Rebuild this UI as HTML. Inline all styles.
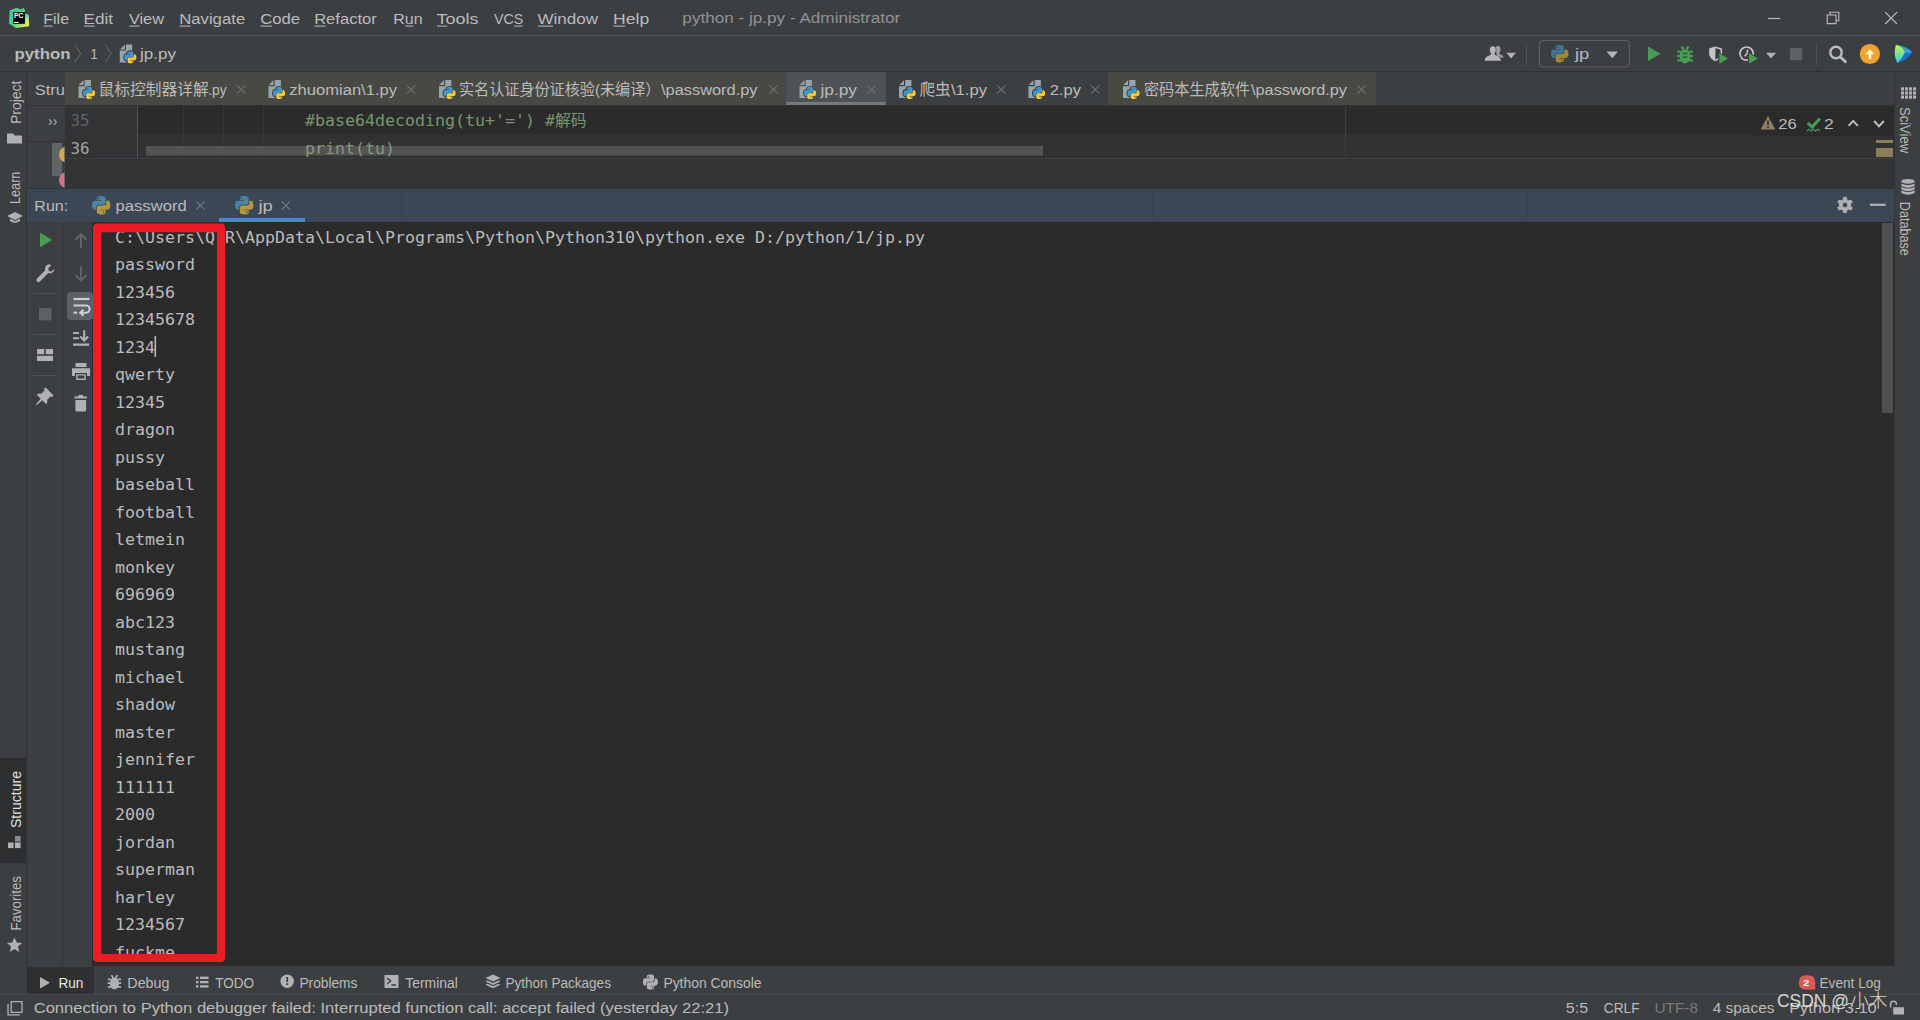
<!DOCTYPE html>
<html lang="zh"><head><meta charset="utf-8"><title>python - jp.py - Administrator</title>
<style>
html,body{margin:0;padding:0;background:#3c3f41;overflow:hidden}
#app{position:relative;width:1920px;height:1020px;overflow:hidden;background:#3c3f41;font-family:"Liberation Sans", "Noto Sans CJK SC", sans-serif}
#app div{position:absolute}
#ov{position:absolute;left:0;top:0}
#ov text{font-family:"Liberation Sans", "Noto Sans CJK SC", sans-serif;white-space:pre}
#ov text.m{font-family:"DejaVu Sans Mono", "Liberation Mono", "Noto Sans CJK SC", monospace}
</style></head><body><div id="app">
<div style="left:0px;top:35px;width:1920px;height:1px;background:#515456;"></div>
<div style="left:0px;top:71px;width:1920px;height:1px;background:#2f3133;"></div>
<div style="left:26px;top:72px;width:1px;height:894.5px;background:#323232;"></div>
<div style="left:1894px;top:72px;width:1px;height:894.5px;background:#323232;"></div>
<div style="left:65px;top:72px;width:721px;height:33px;background:#494944;"></div>
<div style="left:786px;top:72px;width:100px;height:33px;background:#4e5254;"></div>
<div style="left:786px;top:102px;width:100px;height:3.5px;background:#747a80;"></div>
<div style="left:1108px;top:72px;width:268px;height:33px;background:#494944;"></div>
<div style="left:27px;top:105px;width:1867px;height:1px;background:#323232;"></div>
<div style="left:27px;top:141px;width:38px;height:1px;background:#323232;"></div>
<div style="left:52px;top:143px;width:10px;height:33px;background:#626567;"></div>
<div style="left:65px;top:106px;width:72px;height:52px;background:#313335;"></div>
<div style="left:137px;top:106px;width:1px;height:52px;background:#555555;"></div>
<div style="left:138px;top:106px;width:1756px;height:28px;background:#2b2b2b;"></div>
<div style="left:138px;top:134px;width:1756px;height:24px;background:#323232;"></div>
<div style="left:65px;top:134px;width:72px;height:24px;background:#313335;"></div>
<div style="left:182.5px;top:106px;width:1px;height:52px;background:#373737;"></div>
<div style="left:223px;top:106px;width:1px;height:52px;background:#373737;"></div>
<div style="left:263px;top:106px;width:1px;height:52px;background:#373737;"></div>
<div style="left:1345px;top:106px;width:1px;height:52px;background:#3f3f3f;"></div>
<div style="left:1747px;top:106px;width:147px;height:29.5px;background:#2b2b2b;border-radius:0 0 0 7px"></div>
<div style="left:1876px;top:140px;width:17px;height:3px;background:#8c7e58;"></div>
<div style="left:1876px;top:148px;width:17px;height:8.8px;background:#8c7e58;"></div>
<div style="left:65px;top:157.5px;width:1829px;height:1px;background:#3d4042;"></div>
<div style="left:65px;top:158.5px;width:1829px;height:29.5px;background:#313335;"></div>
<div style="left:27px;top:188px;width:1867px;height:34px;background:#3b4754;"></div>
<div style="left:27px;top:188px;width:1867px;height:1px;background:#323232;"></div>
<div style="left:401px;top:189px;width:1px;height:33px;background:#374250;"></div>
<div style="left:1152px;top:189px;width:1px;height:33px;background:#374250;"></div>
<div style="left:1527px;top:189px;width:1px;height:33px;background:#374250;"></div>
<div style="left:218.5px;top:218px;width:86.5px;height:4px;background:#4a88c7;"></div>
<div style="left:62px;top:222px;width:1px;height:744.4px;background:#323232;"></div>
<div style="left:27px;top:222px;width:35px;height:745px;background:#3c3f41;"></div>
<div style="left:63px;top:222px;width:29px;height:745px;background:#3c3f41;"></div>
<div style="left:92px;top:222px;width:1802px;height:744.4px;background:#2b2b2b;"></div>
<div style="left:67px;top:292px;width:26px;height:28px;background:#5c6164;border-radius:4px"></div>
<div style="left:33px;top:292.8px;width:23px;height:1px;background:#515456;"></div>
<div style="left:33px;top:334px;width:23px;height:1px;background:#515456;"></div>
<div style="left:33px;top:375px;width:23px;height:1px;background:#515456;"></div>
<div style="left:1882px;top:223px;width:10.5px;height:190px;background:#4f4f4f;"></div>
<div style="left:26.5px;top:966.5px;width:67px;height:27px;background:#2e3032;"></div>
<div style="left:0px;top:994px;width:1920px;height:1px;background:#484b4d;"></div>
<div style="left:0px;top:758px;width:26px;height:105px;background:#2d2f30;"></div>
<div style="left:1525.5px;top:42.5px;width:1px;height:23px;background:#4d5052;"></div>
<div style="left:1816.3px;top:42.5px;width:1px;height:23px;background:#4d5052;"></div>
<svg id="ov" width="1920" height="1020" viewBox="0 0 1920 1020">
<text x="43.21" y="24" font-size="15.5" fill="#bbbbbb" textLength="25.96" lengthAdjust="spacingAndGlyphs">File</text>
<rect x="43.61" y="25.6" width="9.04" height="1" fill="#bbbbbb"/>
<text x="83.63" y="24" font-size="15.5" fill="#bbbbbb" textLength="29.51" lengthAdjust="spacingAndGlyphs">Edit</text>
<rect x="84.03" y="25.6" width="10.62" height="1" fill="#bbbbbb"/>
<text x="128.92" y="24" font-size="15.5" fill="#bbbbbb" textLength="35.07" lengthAdjust="spacingAndGlyphs">View</text>
<rect x="129.32" y="25.6" width="10.08" height="1" fill="#bbbbbb"/>
<text x="179.16" y="24" font-size="15.5" fill="#bbbbbb" textLength="66.04" lengthAdjust="spacingAndGlyphs">Navigate</text>
<rect x="179.56" y="25.6" width="11.28" height="1" fill="#bbbbbb"/>
<text x="260.16" y="24" font-size="15.5" fill="#bbbbbb" textLength="40.02" lengthAdjust="spacingAndGlyphs">Code</text>
<rect x="260.56" y="25.6" width="11.29" height="1" fill="#bbbbbb"/>
<text x="314.17" y="24" font-size="15.5" fill="#bbbbbb" textLength="62.65" lengthAdjust="spacingAndGlyphs">Refactor</text>
<rect x="314.57" y="25.6" width="11.17" height="1" fill="#bbbbbb"/>
<text x="393.22" y="24" font-size="15.5" fill="#bbbbbb" textLength="29.31" lengthAdjust="spacingAndGlyphs">Run</text>
<rect x="405.16" y="25.6" width="8.09" height="1" fill="#bbbbbb"/>
<text x="436.64" y="24" font-size="15.5" fill="#bbbbbb" textLength="41.98" lengthAdjust="spacingAndGlyphs">Tools</text>
<rect x="437.04" y="25.6" width="10.18" height="1" fill="#bbbbbb"/>
<text x="493.93" y="24" font-size="15.5" fill="#bbbbbb" textLength="29.23" lengthAdjust="spacingAndGlyphs">VCS</text>
<rect x="514.08" y="25.6" width="8.68" height="1" fill="#bbbbbb"/>
<text x="537.41" y="24" font-size="15.5" fill="#bbbbbb" textLength="60.53" lengthAdjust="spacingAndGlyphs">Window</text>
<rect x="537.81" y="25.6" width="15.26" height="1" fill="#bbbbbb"/>
<text x="613.09" y="24" font-size="15.5" fill="#bbbbbb" textLength="36.14" lengthAdjust="spacingAndGlyphs">Help</text>
<rect x="613.49" y="25.6" width="11.89" height="1" fill="#bbbbbb"/>
<text x="682.39" y="23" font-size="15.5" fill="#929292" textLength="217.92" lengthAdjust="spacingAndGlyphs">python - jp.py - Administrator</text>
<text x="14.40" y="59" font-size="15.5" fill="#bbbbbb" font-weight="bold" textLength="56.15" lengthAdjust="spacingAndGlyphs">python</text>
<text x="90.26" y="59" font-size="15.5" fill="#bbbbbb" textLength="7.59" lengthAdjust="spacingAndGlyphs">1</text>
<text x="139.93" y="59" font-size="15.5" fill="#bbbbbb" textLength="36.11" lengthAdjust="spacingAndGlyphs">jp.py</text>
<text x="34.76" y="95" font-size="15.5" fill="#bbbbbb" textLength="30.30" lengthAdjust="spacingAndGlyphs">Stru</text>
<text x="98.61" y="95" font-size="15.5" fill="#bbbbbb" textLength="110.01" lengthAdjust="spacingAndGlyphs">鼠标控制器详解</text>
<text x="208.27" y="95" font-size="15.5" fill="#bbbbbb" textLength="18.22" lengthAdjust="spacingAndGlyphs">.py</text>
<text x="289.34" y="95" font-size="15.5" fill="#bbbbbb" textLength="107.65" lengthAdjust="spacingAndGlyphs">zhuomian\1.py</text>
<text x="458.94" y="95" font-size="15.5" fill="#bbbbbb" textLength="201.53" lengthAdjust="spacingAndGlyphs">实名认证身份证核验(未编译）</text>
<text x="661.00" y="95" font-size="15.5" fill="#bbbbbb" textLength="96.53" lengthAdjust="spacingAndGlyphs">\password.py</text>
<text x="820.43" y="95" font-size="15.5" fill="#bbbbbb" textLength="36.61" lengthAdjust="spacingAndGlyphs">jp.py</text>
<text x="919.53" y="95" font-size="15.5" fill="#bbbbbb" textLength="31.17" lengthAdjust="spacingAndGlyphs">爬虫</text>
<text x="951.00" y="95" font-size="15.5" fill="#bbbbbb" textLength="35.97" lengthAdjust="spacingAndGlyphs">\1.py</text>
<text x="1049.67" y="95" font-size="15.5" fill="#bbbbbb" textLength="31.33" lengthAdjust="spacingAndGlyphs">2.py</text>
<text x="1143.89" y="95" font-size="15.5" fill="#bbbbbb" textLength="106.29" lengthAdjust="spacingAndGlyphs">密码本生成软件</text>
<text x="1251.00" y="95" font-size="15.5" fill="#bbbbbb" textLength="96.03" lengthAdjust="spacingAndGlyphs">\password.py</text>
<text class="m" x="70.5" y="126" font-size="16" fill="#606366" textLength="19" lengthAdjust="spacingAndGlyphs">35</text>
<text class="m" x="70.5" y="154" font-size="16" fill="#a4a3a3" textLength="19" lengthAdjust="spacingAndGlyphs">36</text>
<text class="m" x="305" y="125.5" font-size="16.6" fill="#78966e" textLength="230" lengthAdjust="spacingAndGlyphs">#base64decoding(tu+'=')</text>
<text class="m" x="545" y="125.5" font-size="16.6" fill="#78966e" textLength="10" lengthAdjust="spacingAndGlyphs">#</text>
<text class="m" x="555" y="125.5" font-size="16" fill="#78966e" textLength="31.5" lengthAdjust="spacingAndGlyphs">解码</text>
<text class="m" x="305" y="153.5" font-size="16.6" fill="#78966e" textLength="90" lengthAdjust="spacingAndGlyphs">print(tu)</text>
<rect x="146" y="146" width="897" height="9.5" fill="#a6a6a6" fill-opacity="0.29"/>
<text x="1778.17" y="129" font-size="15.5" fill="#bbbbbb" textLength="18.54" lengthAdjust="spacingAndGlyphs">26</text>
<text x="1824.12" y="129" font-size="15.5" fill="#bbbbbb" textLength="9.78" lengthAdjust="spacingAndGlyphs">2</text>
<text x="34.31" y="210.6" font-size="15.5" fill="#bbbbbb" textLength="33.97" lengthAdjust="spacingAndGlyphs">Run:</text>
<text x="115.52" y="210.6" font-size="15.5" fill="#bbbbbb" textLength="71.16" lengthAdjust="spacingAndGlyphs">password</text>
<text x="258.46" y="210.6" font-size="15.5" fill="#bbbbbb" textLength="14.34" lengthAdjust="spacingAndGlyphs">jp</text>
<clipPath id="cc"><rect x="92" y="222" width="1790" height="732"/></clipPath><g clip-path="url(#cc)">
<text class="m" x="114.9" y="242.55" font-size="16.6" fill="#bbbbbb" textLength="810" lengthAdjust="spacingAndGlyphs">C:\Users\Q R\AppData\Local\Programs\Python\Python310\python.exe D:/python/1/jp.py</text>
<text class="m" x="114.9" y="270.05" font-size="16.6" fill="#bbbbbb" textLength="80" lengthAdjust="spacingAndGlyphs">password</text>
<text class="m" x="114.9" y="297.55" font-size="16.6" fill="#bbbbbb" textLength="60" lengthAdjust="spacingAndGlyphs">123456</text>
<text class="m" x="114.9" y="325.05" font-size="16.6" fill="#bbbbbb" textLength="80" lengthAdjust="spacingAndGlyphs">12345678</text>
<text class="m" x="114.9" y="352.55" font-size="16.6" fill="#bbbbbb" textLength="40" lengthAdjust="spacingAndGlyphs">1234</text>
<text class="m" x="114.9" y="380.05" font-size="16.6" fill="#bbbbbb" textLength="60" lengthAdjust="spacingAndGlyphs">qwerty</text>
<text class="m" x="114.9" y="407.55" font-size="16.6" fill="#bbbbbb" textLength="50" lengthAdjust="spacingAndGlyphs">12345</text>
<text class="m" x="114.9" y="435.05" font-size="16.6" fill="#bbbbbb" textLength="60" lengthAdjust="spacingAndGlyphs">dragon</text>
<text class="m" x="114.9" y="462.55" font-size="16.6" fill="#bbbbbb" textLength="50" lengthAdjust="spacingAndGlyphs">pussy</text>
<text class="m" x="114.9" y="490.05" font-size="16.6" fill="#bbbbbb" textLength="80" lengthAdjust="spacingAndGlyphs">baseball</text>
<text class="m" x="114.9" y="517.55" font-size="16.6" fill="#bbbbbb" textLength="80" lengthAdjust="spacingAndGlyphs">football</text>
<text class="m" x="114.9" y="545.05" font-size="16.6" fill="#bbbbbb" textLength="70" lengthAdjust="spacingAndGlyphs">letmein</text>
<text class="m" x="114.9" y="572.55" font-size="16.6" fill="#bbbbbb" textLength="60" lengthAdjust="spacingAndGlyphs">monkey</text>
<text class="m" x="114.9" y="600.05" font-size="16.6" fill="#bbbbbb" textLength="60" lengthAdjust="spacingAndGlyphs">696969</text>
<text class="m" x="114.9" y="627.55" font-size="16.6" fill="#bbbbbb" textLength="60" lengthAdjust="spacingAndGlyphs">abc123</text>
<text class="m" x="114.9" y="655.05" font-size="16.6" fill="#bbbbbb" textLength="70" lengthAdjust="spacingAndGlyphs">mustang</text>
<text class="m" x="114.9" y="682.55" font-size="16.6" fill="#bbbbbb" textLength="70" lengthAdjust="spacingAndGlyphs">michael</text>
<text class="m" x="114.9" y="710.05" font-size="16.6" fill="#bbbbbb" textLength="60" lengthAdjust="spacingAndGlyphs">shadow</text>
<text class="m" x="114.9" y="737.55" font-size="16.6" fill="#bbbbbb" textLength="60" lengthAdjust="spacingAndGlyphs">master</text>
<text class="m" x="114.9" y="765.05" font-size="16.6" fill="#bbbbbb" textLength="80" lengthAdjust="spacingAndGlyphs">jennifer</text>
<text class="m" x="114.9" y="792.55" font-size="16.6" fill="#bbbbbb" textLength="60" lengthAdjust="spacingAndGlyphs">111111</text>
<text class="m" x="114.9" y="820.05" font-size="16.6" fill="#bbbbbb" textLength="40" lengthAdjust="spacingAndGlyphs">2000</text>
<text class="m" x="114.9" y="847.55" font-size="16.6" fill="#bbbbbb" textLength="60" lengthAdjust="spacingAndGlyphs">jordan</text>
<text class="m" x="114.9" y="875.05" font-size="16.6" fill="#bbbbbb" textLength="80" lengthAdjust="spacingAndGlyphs">superman</text>
<text class="m" x="114.9" y="902.55" font-size="16.6" fill="#bbbbbb" textLength="60" lengthAdjust="spacingAndGlyphs">harley</text>
<text class="m" x="114.9" y="930.05" font-size="16.6" fill="#bbbbbb" textLength="70" lengthAdjust="spacingAndGlyphs">1234567</text>
<text class="m" x="114.9" y="957.55" font-size="16.6" fill="#bbbbbb" textLength="60" lengthAdjust="spacingAndGlyphs">fuckme</text>
</g>
<rect x="154.5" y="336" width="1.6" height="21" fill="#bbbbbb"/>
<text x="58.41" y="988" font-size="14" fill="#e6e6e6" textLength="24.97" lengthAdjust="spacingAndGlyphs">Run</text>
<text x="127.36" y="988" font-size="14" fill="#bbbbbb" textLength="42.10" lengthAdjust="spacingAndGlyphs">Debug</text>
<text x="215.23" y="988" font-size="14" fill="#bbbbbb" textLength="38.89" lengthAdjust="spacingAndGlyphs">TODO</text>
<text x="299.40" y="988" font-size="14" fill="#bbbbbb" textLength="58.06" lengthAdjust="spacingAndGlyphs">Problems</text>
<text x="405.22" y="988" font-size="14" fill="#bbbbbb" textLength="52.74" lengthAdjust="spacingAndGlyphs">Terminal</text>
<text x="505.42" y="988" font-size="14" fill="#bbbbbb" textLength="105.53" lengthAdjust="spacingAndGlyphs">Python Packages</text>
<text x="663.39" y="988" font-size="14" fill="#bbbbbb" textLength="98.17" lengthAdjust="spacingAndGlyphs">Python Console</text>
<text x="1819.51" y="988" font-size="14" fill="#bbbbbb" textLength="61.43" lengthAdjust="spacingAndGlyphs">Event Log</text>
<text x="33.67" y="1012.5" font-size="15.5" fill="#bbbbbb" textLength="695.34" lengthAdjust="spacingAndGlyphs">Connection to Python debugger failed: Interrupted function call: accept failed (yesterday 22:21)</text>
<text x="1565.86" y="1012.5" font-size="15.5" fill="#bbbbbb" textLength="22.28" lengthAdjust="spacingAndGlyphs">5:5</text>
<text x="1603.82" y="1012.5" font-size="15.5" fill="#bbbbbb" textLength="35.75" lengthAdjust="spacingAndGlyphs">CRLF</text>
<text x="1654.44" y="1012.5" font-size="15.5" fill="#787878" textLength="43.72" lengthAdjust="spacingAndGlyphs">UTF-8</text>
<text x="1712.69" y="1012.5" font-size="15.5" fill="#bbbbbb" textLength="61.81" lengthAdjust="spacingAndGlyphs">4 spaces</text>
<text x="1789.19" y="1012.5" font-size="15.5" fill="#bbbbbb" textLength="87.42" lengthAdjust="spacingAndGlyphs">Python 3.10</text>
<text transform="translate(20.5,124) rotate(-90)" font-size="14" fill="#bbbbbb" textLength="43.5" lengthAdjust="spacingAndGlyphs">Project</text>
<text transform="translate(20,204) rotate(-90)" font-size="14" fill="#bbbbbb" textLength="32.4" lengthAdjust="spacingAndGlyphs">Learn</text>
<text transform="translate(21,828) rotate(-90)" font-size="14" fill="#e0e0e0" textLength="57" lengthAdjust="spacingAndGlyphs">Structure</text>
<text transform="translate(21,930.5) rotate(-90)" font-size="14" fill="#bbbbbb" textLength="54.5" lengthAdjust="spacingAndGlyphs">Favorites</text>
<text transform="translate(1900.3,106.9) rotate(90)" font-size="14" fill="#bbbbbb" textLength="46.4" lengthAdjust="spacingAndGlyphs">SciView</text>
<text transform="translate(1900.3,201.8) rotate(90)" font-size="14" fill="#bbbbbb" textLength="54.1" lengthAdjust="spacingAndGlyphs">Database</text>
<g><defs><linearGradient id="pcg" x1="0" y1="0.2" x2="1" y2="1"><stop offset="0" stop-color="#3dc98c"/><stop offset="0.45" stop-color="#52d08a"/><stop offset="0.8" stop-color="#cfea5e"/><stop offset="1" stop-color="#f3f052"/></linearGradient>
<linearGradient id="pcg2" x1="0" y1="0" x2="0" y2="1"><stop offset="0" stop-color="#3fc4e6"/><stop offset="0.45" stop-color="#6fd6c8"/><stop offset="1" stop-color="#f3f052" stop-opacity="0"/></linearGradient></defs>
<path d="M9.6,10.4 L13,9 L17,7.7 L21,9.6 L23.6,7.7 L25,10.6 L25,13.4 L28.6,15 L29.2,26.2 L16,28 L9,23.6 Z" fill="url(#pcg)"/>
<path d="M24.6,13.2 L28.6,15 L29,22 L24.6,22 Z" fill="url(#pcg2)"/>
<rect x="13.1" y="12.1" width="11.8" height="11.7" fill="#000"/>
<text x="13.9" y="18.1" font-size="6.9" font-weight="bold" fill="#ffffff" textLength="9.4" lengthAdjust="spacingAndGlyphs">PC</text><rect x="14" y="21.9" width="4.6" height="1.1" fill="#ffffff"/></g>
<path d="M1768,18.5 H1780.3" stroke="#bbbbbb" stroke-width="1.2"/>
<path d="M1827.2,15 H1836 V23.6 H1827.2 Z M1830,15 V12.2 H1838.8 V20.8 H1836" stroke="#bbbbbb" stroke-width="1.1" fill="none"/>
<path d="M1885.2,12.2 L1897,24 M1897,12.2 L1885.2,24" stroke="#bbbbbb" stroke-width="1.2" fill="none"/>
<path d="M74.6,44.5 L80.6,53.5 L74.6,62.5" stroke="#626567" stroke-width="1.1" fill="none"/>
<path d="M105,44.5 L111,53.5 L105,62.5" stroke="#626567" stroke-width="1.1" fill="none"/>
<g transform="translate(119.8,44.8)" fill="#98a4ab"><path d="M6.2,-0.4 H12.4 V17.6 H0 V5.8 H6.2 Z"/><path d="M0.2,4.6 L5,-0.2 V4.6 Z"/></g>
<g transform="translate(123.54285714285713,50.542857142857144) scale(0.8571428571428571)" opacity="1"><path stroke="#3c3f41" stroke-width="2.6" fill="#3c3f41" d="M7.93,1 C4.38,1 4.6,2.54 4.6,2.54 L4.6,4.13 L8,4.13 L8,4.6 L3.26,4.6 C3.26,4.6 1,4.35 1,7.93 C1,11.5 2.97,11.38 2.97,11.38 L4.15,11.38 L4.15,9.72 C4.15,9.72 4.09,7.75 6.09,7.75 L9.44,7.75 C9.44,7.75 11.32,7.78 11.32,5.93 L11.32,2.87 C11.32,2.87 11.6,1 7.93,1 Z M6.06,2.07 C6.4,2.07 6.67,2.34 6.67,2.68 C6.67,3.02 6.4,3.29 6.06,3.29 C5.72,3.29 5.45,3.02 5.45,2.68 C5.45,2.34 5.72,2.07 6.06,2.07 Z"/><path stroke="#3c3f41" stroke-width="2.6" fill="#3c3f41" d="M8.07,15 C11.62,15 11.4,13.46 11.4,13.46 L11.4,11.87 L8,11.87 L8,11.4 L12.74,11.4 C12.74,11.4 15,11.65 15,8.07 C15,4.5 13.03,4.62 13.03,4.62 L11.85,4.62 L11.85,6.28 C11.85,6.28 11.91,8.25 9.91,8.25 L6.56,8.25 C6.56,8.25 4.68,8.22 4.68,10.07 L4.68,13.13 C4.68,13.13 4.4,15 8.07,15 Z M9.94,13.93 C9.6,13.93 9.33,13.66 9.33,13.32 C9.33,12.98 9.6,12.71 9.94,12.71 C10.28,12.71 10.55,12.98 10.55,13.32 C10.55,13.66 10.28,13.93 9.94,13.93 Z"/><path fill-rule="evenodd" fill="#3d9ad0" d="M7.93,1 C4.38,1 4.6,2.54 4.6,2.54 L4.6,4.13 L8,4.13 L8,4.6 L3.26,4.6 C3.26,4.6 1,4.35 1,7.93 C1,11.5 2.97,11.38 2.97,11.38 L4.15,11.38 L4.15,9.72 C4.15,9.72 4.09,7.75 6.09,7.75 L9.44,7.75 C9.44,7.75 11.32,7.78 11.32,5.93 L11.32,2.87 C11.32,2.87 11.6,1 7.93,1 Z M6.06,2.07 C6.4,2.07 6.67,2.34 6.67,2.68 C6.67,3.02 6.4,3.29 6.06,3.29 C5.72,3.29 5.45,3.02 5.45,2.68 C5.45,2.34 5.72,2.07 6.06,2.07 Z"/><path fill-rule="evenodd" fill="#f6c83c" d="M8.07,15 C11.62,15 11.4,13.46 11.4,13.46 L11.4,11.87 L8,11.87 L8,11.4 L12.74,11.4 C12.74,11.4 15,11.65 15,8.07 C15,4.5 13.03,4.62 13.03,4.62 L11.85,4.62 L11.85,6.28 C11.85,6.28 11.91,8.25 9.91,8.25 L6.56,8.25 C6.56,8.25 4.68,8.22 4.68,10.07 L4.68,13.13 C4.68,13.13 4.4,15 8.07,15 Z M9.94,13.93 C9.6,13.93 9.33,13.66 9.33,13.32 C9.33,12.98 9.6,12.71 9.94,12.71 C10.28,12.71 10.55,12.98 10.55,13.32 C10.55,13.66 10.28,13.93 9.94,13.93 Z"/></g>
<g fill="#b4b6b8"><g fill="#9fa1a3"><ellipse cx="1497.8" cy="49.4" rx="2.7" ry="3.4"/><path d="M1496.5,52 h2.6 v1.2 q0.4,1 2.4,1.7 q2,0.8 2,2.6 h-7z"/></g><ellipse cx="1492.8" cy="49.9" rx="3.6" ry="4.3" fill="#3c3f41"/><path d="M1484.2,61.4 q0,-4.6 3.9,-5.6 q2.4,-0.8 2.8,-2 h3.8 q0.4,1.2 2.8,2 q3.9,1 3.9,5.6z" fill="#3c3f41"/><ellipse cx="1492.8" cy="49.9" rx="3" ry="3.7"/><path d="M1491.3,52.4 h3 v1.7 q0.5,1.2 3.2,2 q3.2,1 3.3,4.6 h-16 q0.1,-3.6 3.3,-4.6 q2.7,-0.8 3.2,-2 z"/><path d="M1506.4,52.8 h9.5 l-4.75,5.6z" fill="#afb1b3"/></g>
<rect x="1539.5" y="40.5" width="89.8" height="26.5" rx="4" fill="#3c3f41" stroke="#5e6163" stroke-width="1.2"/>
<g transform="translate(1549.75,43.75) scale(1.25)" opacity="1"><path fill-rule="evenodd" fill="#3f7398" d="M7.93,1 C4.38,1 4.6,2.54 4.6,2.54 L4.6,4.13 L8,4.13 L8,4.6 L3.26,4.6 C3.26,4.6 1,4.35 1,7.93 C1,11.5 2.97,11.38 2.97,11.38 L4.15,11.38 L4.15,9.72 C4.15,9.72 4.09,7.75 6.09,7.75 L9.44,7.75 C9.44,7.75 11.32,7.78 11.32,5.93 L11.32,2.87 C11.32,2.87 11.6,1 7.93,1 Z M6.06,2.07 C6.4,2.07 6.67,2.34 6.67,2.68 C6.67,3.02 6.4,3.29 6.06,3.29 C5.72,3.29 5.45,3.02 5.45,2.68 C5.45,2.34 5.72,2.07 6.06,2.07 Z"/><path fill-rule="evenodd" fill="#9d8937" d="M8.07,15 C11.62,15 11.4,13.46 11.4,13.46 L11.4,11.87 L8,11.87 L8,11.4 L12.74,11.4 C12.74,11.4 15,11.65 15,8.07 C15,4.5 13.03,4.62 13.03,4.62 L11.85,4.62 L11.85,6.28 C11.85,6.28 11.91,8.25 9.91,8.25 L6.56,8.25 C6.56,8.25 4.68,8.22 4.68,10.07 L4.68,13.13 C4.68,13.13 4.4,15 8.07,15 Z M9.94,13.93 C9.6,13.93 9.33,13.66 9.33,13.32 C9.33,12.98 9.6,12.71 9.94,12.71 C10.28,12.71 10.55,12.98 10.55,13.32 C10.55,13.66 10.28,13.93 9.94,13.93 Z"/></g>
<text x="1574.96" y="59" font-size="15.5" fill="#bbbbbb" textLength="14.34" lengthAdjust="spacingAndGlyphs">jp</text>
<path d="M1606.5,51.5 h11.5 l-5.75,6.8z" fill="#afb1b3"/>
<path d="M1648,46.5 L1660.5,53.8 L1648,61 Z" fill="#499c54"/>
<g transform="translate(1676.5,45.8) scale(1)"><ellipse cx="8.5" cy="10.5" rx="5.5" ry="7.1" fill="#499c54"/><path d="M5,0.6 L7,4 M12,0.6 L10,4 M0.7,5.8 H4.5 M16.3,5.8 H12.5 M0.4,10.2 H4 M16.6,10.2 H13 M0.7,14.6 H4.5 M16.3,14.6 H12.5" stroke="#499c54" stroke-width="2.1" fill="none"/><path d="M6.2,7.8 H10.8 M6.2,11.4 H10.8" stroke="#2f5d36" stroke-width="1.5"/></g>
<g><path d="M1715.4,46.4 L1709.2,48.3 V53.5 Q1709.2,58.6 1715.4,61.4 Z" fill="#c4c6c8"/><path d="M1715.4,47.3 L1721.3,49 V53.5 Q1721.3,57.6 1715.4,60.5" fill="none" stroke="#c4c6c8" stroke-width="1.6"/><path d="M1718.2,51.6 L1729.6,58.5 L1718.2,65.4 Z" fill="#3c3f41"/><path d="M1719.3,53.3 L1728,58.5 L1719.3,63.8 Z" fill="#499c54"/></g>
<g><circle cx="1746.6" cy="53.6" r="6.6" fill="none" stroke="#c4c6c8" stroke-width="1.7"/><path d="M1747.6,49.6 L1747,53.8 L1744.6,56.2" stroke="#c4c6c8" stroke-width="1.5" fill="none"/><path d="M1747.9,51.6 L1759.3,58.5 L1747.9,65.4 Z" fill="#3c3f41"/><path d="M1749,53.3 L1757.8,58.5 L1749,63.8 Z" fill="#499c54"/><path d="M1766,52.8 h10 l-5,5.6z" fill="#afb1b3"/></g>
<rect x="1790" y="48" width="12.3" height="12.3" fill="#5f6265"/>
<g stroke="#bbbdbf" fill="none"><circle cx="1836" cy="52.5" r="5.7" stroke-width="2.4"/><path d="M1840.2,56.8 L1846.2,62.6" stroke-width="2.8"/></g>
<circle cx="1869.9" cy="54" r="10.1" fill="#f3a332"/><path d="M1869.9,49.2 L1874.4,54.2 H1871.1 V59 H1868.7 V54.2 H1865.4 Z" fill="#fffbe0"/>
<g><defs><linearGradient id="sp1" x1="0" y1="0" x2="0" y2="1"><stop offset="0" stop-color="#d6f455"/><stop offset="0.5" stop-color="#74e292"/><stop offset="1" stop-color="#38cdf0"/></linearGradient><linearGradient id="sp2" x1="0" y1="0" x2="1" y2="0.6"><stop offset="0" stop-color="#14b48e"/><stop offset="1" stop-color="#4a9af2"/></linearGradient></defs>
<path d="M1896,44.8 Q1906,46 1912.2,52.6 Q1907,60.4 1897.4,63 Q1892.8,54 1896,44.8 Z" fill="#1a74d0"/>
<path d="M1896,44.8 Q1906,46 1912.2,52.6 L1904.7,52.6 Q1903.5,47.5 1896,44.8 Z" fill="url(#sp2)"/>
<path d="M1896,44.8 Q1903.5,47.5 1904.9,52.6 Q1902.4,58.6 1897.4,63 Q1892.8,54 1896,44.8 Z" fill="url(#sp1)"/></g>
<g transform="translate(78.5,80.5)" fill="#98a4ab"><path d="M6.2,-0.4 H12.4 V17.6 H0 V5.8 H6.2 Z"/><path d="M0.2,4.6 L5,-0.2 V4.6 Z"/></g>
<g transform="translate(82.24285714285713,86.24285714285713) scale(0.8571428571428571)" opacity="1"><path stroke="#494944" stroke-width="2.6" fill="#494944" d="M7.93,1 C4.38,1 4.6,2.54 4.6,2.54 L4.6,4.13 L8,4.13 L8,4.6 L3.26,4.6 C3.26,4.6 1,4.35 1,7.93 C1,11.5 2.97,11.38 2.97,11.38 L4.15,11.38 L4.15,9.72 C4.15,9.72 4.09,7.75 6.09,7.75 L9.44,7.75 C9.44,7.75 11.32,7.78 11.32,5.93 L11.32,2.87 C11.32,2.87 11.6,1 7.93,1 Z M6.06,2.07 C6.4,2.07 6.67,2.34 6.67,2.68 C6.67,3.02 6.4,3.29 6.06,3.29 C5.72,3.29 5.45,3.02 5.45,2.68 C5.45,2.34 5.72,2.07 6.06,2.07 Z"/><path stroke="#494944" stroke-width="2.6" fill="#494944" d="M8.07,15 C11.62,15 11.4,13.46 11.4,13.46 L11.4,11.87 L8,11.87 L8,11.4 L12.74,11.4 C12.74,11.4 15,11.65 15,8.07 C15,4.5 13.03,4.62 13.03,4.62 L11.85,4.62 L11.85,6.28 C11.85,6.28 11.91,8.25 9.91,8.25 L6.56,8.25 C6.56,8.25 4.68,8.22 4.68,10.07 L4.68,13.13 C4.68,13.13 4.4,15 8.07,15 Z M9.94,13.93 C9.6,13.93 9.33,13.66 9.33,13.32 C9.33,12.98 9.6,12.71 9.94,12.71 C10.28,12.71 10.55,12.98 10.55,13.32 C10.55,13.66 10.28,13.93 9.94,13.93 Z"/><path fill-rule="evenodd" fill="#3d9ad0" d="M7.93,1 C4.38,1 4.6,2.54 4.6,2.54 L4.6,4.13 L8,4.13 L8,4.6 L3.26,4.6 C3.26,4.6 1,4.35 1,7.93 C1,11.5 2.97,11.38 2.97,11.38 L4.15,11.38 L4.15,9.72 C4.15,9.72 4.09,7.75 6.09,7.75 L9.44,7.75 C9.44,7.75 11.32,7.78 11.32,5.93 L11.32,2.87 C11.32,2.87 11.6,1 7.93,1 Z M6.06,2.07 C6.4,2.07 6.67,2.34 6.67,2.68 C6.67,3.02 6.4,3.29 6.06,3.29 C5.72,3.29 5.45,3.02 5.45,2.68 C5.45,2.34 5.72,2.07 6.06,2.07 Z"/><path fill-rule="evenodd" fill="#f6c83c" d="M8.07,15 C11.62,15 11.4,13.46 11.4,13.46 L11.4,11.87 L8,11.87 L8,11.4 L12.74,11.4 C12.74,11.4 15,11.65 15,8.07 C15,4.5 13.03,4.62 13.03,4.62 L11.85,4.62 L11.85,6.28 C11.85,6.28 11.91,8.25 9.91,8.25 L6.56,8.25 C6.56,8.25 4.68,8.22 4.68,10.07 L4.68,13.13 C4.68,13.13 4.4,15 8.07,15 Z M9.94,13.93 C9.6,13.93 9.33,13.66 9.33,13.32 C9.33,12.98 9.6,12.71 9.94,12.71 C10.28,12.71 10.55,12.98 10.55,13.32 C10.55,13.66 10.28,13.93 9.94,13.93 Z"/></g>
<path d="M237.0,85.3 L245.39999999999998,93.7 M245.39999999999998,85.3 L237.0,93.7" stroke="#6e7173" stroke-width="1.2" fill="none"/>
<g transform="translate(268.5,80.5)" fill="#98a4ab"><path d="M6.2,-0.4 H12.4 V17.6 H0 V5.8 H6.2 Z"/><path d="M0.2,4.6 L5,-0.2 V4.6 Z"/></g>
<g transform="translate(272.2428571428572,86.24285714285713) scale(0.8571428571428571)" opacity="1"><path stroke="#494944" stroke-width="2.6" fill="#494944" d="M7.93,1 C4.38,1 4.6,2.54 4.6,2.54 L4.6,4.13 L8,4.13 L8,4.6 L3.26,4.6 C3.26,4.6 1,4.35 1,7.93 C1,11.5 2.97,11.38 2.97,11.38 L4.15,11.38 L4.15,9.72 C4.15,9.72 4.09,7.75 6.09,7.75 L9.44,7.75 C9.44,7.75 11.32,7.78 11.32,5.93 L11.32,2.87 C11.32,2.87 11.6,1 7.93,1 Z M6.06,2.07 C6.4,2.07 6.67,2.34 6.67,2.68 C6.67,3.02 6.4,3.29 6.06,3.29 C5.72,3.29 5.45,3.02 5.45,2.68 C5.45,2.34 5.72,2.07 6.06,2.07 Z"/><path stroke="#494944" stroke-width="2.6" fill="#494944" d="M8.07,15 C11.62,15 11.4,13.46 11.4,13.46 L11.4,11.87 L8,11.87 L8,11.4 L12.74,11.4 C12.74,11.4 15,11.65 15,8.07 C15,4.5 13.03,4.62 13.03,4.62 L11.85,4.62 L11.85,6.28 C11.85,6.28 11.91,8.25 9.91,8.25 L6.56,8.25 C6.56,8.25 4.68,8.22 4.68,10.07 L4.68,13.13 C4.68,13.13 4.4,15 8.07,15 Z M9.94,13.93 C9.6,13.93 9.33,13.66 9.33,13.32 C9.33,12.98 9.6,12.71 9.94,12.71 C10.28,12.71 10.55,12.98 10.55,13.32 C10.55,13.66 10.28,13.93 9.94,13.93 Z"/><path fill-rule="evenodd" fill="#3d9ad0" d="M7.93,1 C4.38,1 4.6,2.54 4.6,2.54 L4.6,4.13 L8,4.13 L8,4.6 L3.26,4.6 C3.26,4.6 1,4.35 1,7.93 C1,11.5 2.97,11.38 2.97,11.38 L4.15,11.38 L4.15,9.72 C4.15,9.72 4.09,7.75 6.09,7.75 L9.44,7.75 C9.44,7.75 11.32,7.78 11.32,5.93 L11.32,2.87 C11.32,2.87 11.6,1 7.93,1 Z M6.06,2.07 C6.4,2.07 6.67,2.34 6.67,2.68 C6.67,3.02 6.4,3.29 6.06,3.29 C5.72,3.29 5.45,3.02 5.45,2.68 C5.45,2.34 5.72,2.07 6.06,2.07 Z"/><path fill-rule="evenodd" fill="#f6c83c" d="M8.07,15 C11.62,15 11.4,13.46 11.4,13.46 L11.4,11.87 L8,11.87 L8,11.4 L12.74,11.4 C12.74,11.4 15,11.65 15,8.07 C15,4.5 13.03,4.62 13.03,4.62 L11.85,4.62 L11.85,6.28 C11.85,6.28 11.91,8.25 9.91,8.25 L6.56,8.25 C6.56,8.25 4.68,8.22 4.68,10.07 L4.68,13.13 C4.68,13.13 4.4,15 8.07,15 Z M9.94,13.93 C9.6,13.93 9.33,13.66 9.33,13.32 C9.33,12.98 9.6,12.71 9.94,12.71 C10.28,12.71 10.55,12.98 10.55,13.32 C10.55,13.66 10.28,13.93 9.94,13.93 Z"/></g>
<path d="M407.0,85.3 L415.4,93.7 M415.4,85.3 L407.0,93.7" stroke="#6e7173" stroke-width="1.2" fill="none"/>
<g transform="translate(439,80.5)" fill="#98a4ab"><path d="M6.2,-0.4 H12.4 V17.6 H0 V5.8 H6.2 Z"/><path d="M0.2,4.6 L5,-0.2 V4.6 Z"/></g>
<g transform="translate(442.7428571428572,86.24285714285713) scale(0.8571428571428571)" opacity="1"><path stroke="#494944" stroke-width="2.6" fill="#494944" d="M7.93,1 C4.38,1 4.6,2.54 4.6,2.54 L4.6,4.13 L8,4.13 L8,4.6 L3.26,4.6 C3.26,4.6 1,4.35 1,7.93 C1,11.5 2.97,11.38 2.97,11.38 L4.15,11.38 L4.15,9.72 C4.15,9.72 4.09,7.75 6.09,7.75 L9.44,7.75 C9.44,7.75 11.32,7.78 11.32,5.93 L11.32,2.87 C11.32,2.87 11.6,1 7.93,1 Z M6.06,2.07 C6.4,2.07 6.67,2.34 6.67,2.68 C6.67,3.02 6.4,3.29 6.06,3.29 C5.72,3.29 5.45,3.02 5.45,2.68 C5.45,2.34 5.72,2.07 6.06,2.07 Z"/><path stroke="#494944" stroke-width="2.6" fill="#494944" d="M8.07,15 C11.62,15 11.4,13.46 11.4,13.46 L11.4,11.87 L8,11.87 L8,11.4 L12.74,11.4 C12.74,11.4 15,11.65 15,8.07 C15,4.5 13.03,4.62 13.03,4.62 L11.85,4.62 L11.85,6.28 C11.85,6.28 11.91,8.25 9.91,8.25 L6.56,8.25 C6.56,8.25 4.68,8.22 4.68,10.07 L4.68,13.13 C4.68,13.13 4.4,15 8.07,15 Z M9.94,13.93 C9.6,13.93 9.33,13.66 9.33,13.32 C9.33,12.98 9.6,12.71 9.94,12.71 C10.28,12.71 10.55,12.98 10.55,13.32 C10.55,13.66 10.28,13.93 9.94,13.93 Z"/><path fill-rule="evenodd" fill="#3d9ad0" d="M7.93,1 C4.38,1 4.6,2.54 4.6,2.54 L4.6,4.13 L8,4.13 L8,4.6 L3.26,4.6 C3.26,4.6 1,4.35 1,7.93 C1,11.5 2.97,11.38 2.97,11.38 L4.15,11.38 L4.15,9.72 C4.15,9.72 4.09,7.75 6.09,7.75 L9.44,7.75 C9.44,7.75 11.32,7.78 11.32,5.93 L11.32,2.87 C11.32,2.87 11.6,1 7.93,1 Z M6.06,2.07 C6.4,2.07 6.67,2.34 6.67,2.68 C6.67,3.02 6.4,3.29 6.06,3.29 C5.72,3.29 5.45,3.02 5.45,2.68 C5.45,2.34 5.72,2.07 6.06,2.07 Z"/><path fill-rule="evenodd" fill="#f6c83c" d="M8.07,15 C11.62,15 11.4,13.46 11.4,13.46 L11.4,11.87 L8,11.87 L8,11.4 L12.74,11.4 C12.74,11.4 15,11.65 15,8.07 C15,4.5 13.03,4.62 13.03,4.62 L11.85,4.62 L11.85,6.28 C11.85,6.28 11.91,8.25 9.91,8.25 L6.56,8.25 C6.56,8.25 4.68,8.22 4.68,10.07 L4.68,13.13 C4.68,13.13 4.4,15 8.07,15 Z M9.94,13.93 C9.6,13.93 9.33,13.66 9.33,13.32 C9.33,12.98 9.6,12.71 9.94,12.71 C10.28,12.71 10.55,12.98 10.55,13.32 C10.55,13.66 10.28,13.93 9.94,13.93 Z"/></g>
<path d="M769.1999999999999,85.3 L777.6,93.7 M777.6,85.3 L769.1999999999999,93.7" stroke="#6e7173" stroke-width="1.2" fill="none"/>
<g transform="translate(799.5,80.5)" fill="#98a4ab"><path d="M6.2,-0.4 H12.4 V17.6 H0 V5.8 H6.2 Z"/><path d="M0.2,4.6 L5,-0.2 V4.6 Z"/></g>
<g transform="translate(803.2428571428571,86.24285714285713) scale(0.8571428571428571)" opacity="1"><path stroke="#4e5254" stroke-width="2.6" fill="#4e5254" d="M7.93,1 C4.38,1 4.6,2.54 4.6,2.54 L4.6,4.13 L8,4.13 L8,4.6 L3.26,4.6 C3.26,4.6 1,4.35 1,7.93 C1,11.5 2.97,11.38 2.97,11.38 L4.15,11.38 L4.15,9.72 C4.15,9.72 4.09,7.75 6.09,7.75 L9.44,7.75 C9.44,7.75 11.32,7.78 11.32,5.93 L11.32,2.87 C11.32,2.87 11.6,1 7.93,1 Z M6.06,2.07 C6.4,2.07 6.67,2.34 6.67,2.68 C6.67,3.02 6.4,3.29 6.06,3.29 C5.72,3.29 5.45,3.02 5.45,2.68 C5.45,2.34 5.72,2.07 6.06,2.07 Z"/><path stroke="#4e5254" stroke-width="2.6" fill="#4e5254" d="M8.07,15 C11.62,15 11.4,13.46 11.4,13.46 L11.4,11.87 L8,11.87 L8,11.4 L12.74,11.4 C12.74,11.4 15,11.65 15,8.07 C15,4.5 13.03,4.62 13.03,4.62 L11.85,4.62 L11.85,6.28 C11.85,6.28 11.91,8.25 9.91,8.25 L6.56,8.25 C6.56,8.25 4.68,8.22 4.68,10.07 L4.68,13.13 C4.68,13.13 4.4,15 8.07,15 Z M9.94,13.93 C9.6,13.93 9.33,13.66 9.33,13.32 C9.33,12.98 9.6,12.71 9.94,12.71 C10.28,12.71 10.55,12.98 10.55,13.32 C10.55,13.66 10.28,13.93 9.94,13.93 Z"/><path fill-rule="evenodd" fill="#3d9ad0" d="M7.93,1 C4.38,1 4.6,2.54 4.6,2.54 L4.6,4.13 L8,4.13 L8,4.6 L3.26,4.6 C3.26,4.6 1,4.35 1,7.93 C1,11.5 2.97,11.38 2.97,11.38 L4.15,11.38 L4.15,9.72 C4.15,9.72 4.09,7.75 6.09,7.75 L9.44,7.75 C9.44,7.75 11.32,7.78 11.32,5.93 L11.32,2.87 C11.32,2.87 11.6,1 7.93,1 Z M6.06,2.07 C6.4,2.07 6.67,2.34 6.67,2.68 C6.67,3.02 6.4,3.29 6.06,3.29 C5.72,3.29 5.45,3.02 5.45,2.68 C5.45,2.34 5.72,2.07 6.06,2.07 Z"/><path fill-rule="evenodd" fill="#f6c83c" d="M8.07,15 C11.62,15 11.4,13.46 11.4,13.46 L11.4,11.87 L8,11.87 L8,11.4 L12.74,11.4 C12.74,11.4 15,11.65 15,8.07 C15,4.5 13.03,4.62 13.03,4.62 L11.85,4.62 L11.85,6.28 C11.85,6.28 11.91,8.25 9.91,8.25 L6.56,8.25 C6.56,8.25 4.68,8.22 4.68,10.07 L4.68,13.13 C4.68,13.13 4.4,15 8.07,15 Z M9.94,13.93 C9.6,13.93 9.33,13.66 9.33,13.32 C9.33,12.98 9.6,12.71 9.94,12.71 C10.28,12.71 10.55,12.98 10.55,13.32 C10.55,13.66 10.28,13.93 9.94,13.93 Z"/></g>
<path d="M867.3,85.3 L875.7,93.7 M875.7,85.3 L867.3,93.7" stroke="#6e7173" stroke-width="1.2" fill="none"/>
<g transform="translate(899,80.5)" fill="#98a4ab"><path d="M6.2,-0.4 H12.4 V17.6 H0 V5.8 H6.2 Z"/><path d="M0.2,4.6 L5,-0.2 V4.6 Z"/></g>
<g transform="translate(902.7428571428571,86.24285714285713) scale(0.8571428571428571)" opacity="1"><path stroke="#3c3f41" stroke-width="2.6" fill="#3c3f41" d="M7.93,1 C4.38,1 4.6,2.54 4.6,2.54 L4.6,4.13 L8,4.13 L8,4.6 L3.26,4.6 C3.26,4.6 1,4.35 1,7.93 C1,11.5 2.97,11.38 2.97,11.38 L4.15,11.38 L4.15,9.72 C4.15,9.72 4.09,7.75 6.09,7.75 L9.44,7.75 C9.44,7.75 11.32,7.78 11.32,5.93 L11.32,2.87 C11.32,2.87 11.6,1 7.93,1 Z M6.06,2.07 C6.4,2.07 6.67,2.34 6.67,2.68 C6.67,3.02 6.4,3.29 6.06,3.29 C5.72,3.29 5.45,3.02 5.45,2.68 C5.45,2.34 5.72,2.07 6.06,2.07 Z"/><path stroke="#3c3f41" stroke-width="2.6" fill="#3c3f41" d="M8.07,15 C11.62,15 11.4,13.46 11.4,13.46 L11.4,11.87 L8,11.87 L8,11.4 L12.74,11.4 C12.74,11.4 15,11.65 15,8.07 C15,4.5 13.03,4.62 13.03,4.62 L11.85,4.62 L11.85,6.28 C11.85,6.28 11.91,8.25 9.91,8.25 L6.56,8.25 C6.56,8.25 4.68,8.22 4.68,10.07 L4.68,13.13 C4.68,13.13 4.4,15 8.07,15 Z M9.94,13.93 C9.6,13.93 9.33,13.66 9.33,13.32 C9.33,12.98 9.6,12.71 9.94,12.71 C10.28,12.71 10.55,12.98 10.55,13.32 C10.55,13.66 10.28,13.93 9.94,13.93 Z"/><path fill-rule="evenodd" fill="#3d9ad0" d="M7.93,1 C4.38,1 4.6,2.54 4.6,2.54 L4.6,4.13 L8,4.13 L8,4.6 L3.26,4.6 C3.26,4.6 1,4.35 1,7.93 C1,11.5 2.97,11.38 2.97,11.38 L4.15,11.38 L4.15,9.72 C4.15,9.72 4.09,7.75 6.09,7.75 L9.44,7.75 C9.44,7.75 11.32,7.78 11.32,5.93 L11.32,2.87 C11.32,2.87 11.6,1 7.93,1 Z M6.06,2.07 C6.4,2.07 6.67,2.34 6.67,2.68 C6.67,3.02 6.4,3.29 6.06,3.29 C5.72,3.29 5.45,3.02 5.45,2.68 C5.45,2.34 5.72,2.07 6.06,2.07 Z"/><path fill-rule="evenodd" fill="#f6c83c" d="M8.07,15 C11.62,15 11.4,13.46 11.4,13.46 L11.4,11.87 L8,11.87 L8,11.4 L12.74,11.4 C12.74,11.4 15,11.65 15,8.07 C15,4.5 13.03,4.62 13.03,4.62 L11.85,4.62 L11.85,6.28 C11.85,6.28 11.91,8.25 9.91,8.25 L6.56,8.25 C6.56,8.25 4.68,8.22 4.68,10.07 L4.68,13.13 C4.68,13.13 4.4,15 8.07,15 Z M9.94,13.93 C9.6,13.93 9.33,13.66 9.33,13.32 C9.33,12.98 9.6,12.71 9.94,12.71 C10.28,12.71 10.55,12.98 10.55,13.32 C10.55,13.66 10.28,13.93 9.94,13.93 Z"/></g>
<path d="M997.0,85.3 L1005.4000000000001,93.7 M1005.4000000000001,85.3 L997.0,93.7" stroke="#6e7173" stroke-width="1.2" fill="none"/>
<g transform="translate(1028.5,80.5)" fill="#98a4ab"><path d="M6.2,-0.4 H12.4 V17.6 H0 V5.8 H6.2 Z"/><path d="M0.2,4.6 L5,-0.2 V4.6 Z"/></g>
<g transform="translate(1032.242857142857,86.24285714285713) scale(0.8571428571428571)" opacity="1"><path stroke="#3c3f41" stroke-width="2.6" fill="#3c3f41" d="M7.93,1 C4.38,1 4.6,2.54 4.6,2.54 L4.6,4.13 L8,4.13 L8,4.6 L3.26,4.6 C3.26,4.6 1,4.35 1,7.93 C1,11.5 2.97,11.38 2.97,11.38 L4.15,11.38 L4.15,9.72 C4.15,9.72 4.09,7.75 6.09,7.75 L9.44,7.75 C9.44,7.75 11.32,7.78 11.32,5.93 L11.32,2.87 C11.32,2.87 11.6,1 7.93,1 Z M6.06,2.07 C6.4,2.07 6.67,2.34 6.67,2.68 C6.67,3.02 6.4,3.29 6.06,3.29 C5.72,3.29 5.45,3.02 5.45,2.68 C5.45,2.34 5.72,2.07 6.06,2.07 Z"/><path stroke="#3c3f41" stroke-width="2.6" fill="#3c3f41" d="M8.07,15 C11.62,15 11.4,13.46 11.4,13.46 L11.4,11.87 L8,11.87 L8,11.4 L12.74,11.4 C12.74,11.4 15,11.65 15,8.07 C15,4.5 13.03,4.62 13.03,4.62 L11.85,4.62 L11.85,6.28 C11.85,6.28 11.91,8.25 9.91,8.25 L6.56,8.25 C6.56,8.25 4.68,8.22 4.68,10.07 L4.68,13.13 C4.68,13.13 4.4,15 8.07,15 Z M9.94,13.93 C9.6,13.93 9.33,13.66 9.33,13.32 C9.33,12.98 9.6,12.71 9.94,12.71 C10.28,12.71 10.55,12.98 10.55,13.32 C10.55,13.66 10.28,13.93 9.94,13.93 Z"/><path fill-rule="evenodd" fill="#3d9ad0" d="M7.93,1 C4.38,1 4.6,2.54 4.6,2.54 L4.6,4.13 L8,4.13 L8,4.6 L3.26,4.6 C3.26,4.6 1,4.35 1,7.93 C1,11.5 2.97,11.38 2.97,11.38 L4.15,11.38 L4.15,9.72 C4.15,9.72 4.09,7.75 6.09,7.75 L9.44,7.75 C9.44,7.75 11.32,7.78 11.32,5.93 L11.32,2.87 C11.32,2.87 11.6,1 7.93,1 Z M6.06,2.07 C6.4,2.07 6.67,2.34 6.67,2.68 C6.67,3.02 6.4,3.29 6.06,3.29 C5.72,3.29 5.45,3.02 5.45,2.68 C5.45,2.34 5.72,2.07 6.06,2.07 Z"/><path fill-rule="evenodd" fill="#f6c83c" d="M8.07,15 C11.62,15 11.4,13.46 11.4,13.46 L11.4,11.87 L8,11.87 L8,11.4 L12.74,11.4 C12.74,11.4 15,11.65 15,8.07 C15,4.5 13.03,4.62 13.03,4.62 L11.85,4.62 L11.85,6.28 C11.85,6.28 11.91,8.25 9.91,8.25 L6.56,8.25 C6.56,8.25 4.68,8.22 4.68,10.07 L4.68,13.13 C4.68,13.13 4.4,15 8.07,15 Z M9.94,13.93 C9.6,13.93 9.33,13.66 9.33,13.32 C9.33,12.98 9.6,12.71 9.94,12.71 C10.28,12.71 10.55,12.98 10.55,13.32 C10.55,13.66 10.28,13.93 9.94,13.93 Z"/></g>
<path d="M1091.0,85.3 L1099.4,93.7 M1099.4,85.3 L1091.0,93.7" stroke="#6e7173" stroke-width="1.2" fill="none"/>
<g transform="translate(1123,80.5)" fill="#98a4ab"><path d="M6.2,-0.4 H12.4 V17.6 H0 V5.8 H6.2 Z"/><path d="M0.2,4.6 L5,-0.2 V4.6 Z"/></g>
<g transform="translate(1126.742857142857,86.24285714285713) scale(0.8571428571428571)" opacity="1"><path stroke="#494944" stroke-width="2.6" fill="#494944" d="M7.93,1 C4.38,1 4.6,2.54 4.6,2.54 L4.6,4.13 L8,4.13 L8,4.6 L3.26,4.6 C3.26,4.6 1,4.35 1,7.93 C1,11.5 2.97,11.38 2.97,11.38 L4.15,11.38 L4.15,9.72 C4.15,9.72 4.09,7.75 6.09,7.75 L9.44,7.75 C9.44,7.75 11.32,7.78 11.32,5.93 L11.32,2.87 C11.32,2.87 11.6,1 7.93,1 Z M6.06,2.07 C6.4,2.07 6.67,2.34 6.67,2.68 C6.67,3.02 6.4,3.29 6.06,3.29 C5.72,3.29 5.45,3.02 5.45,2.68 C5.45,2.34 5.72,2.07 6.06,2.07 Z"/><path stroke="#494944" stroke-width="2.6" fill="#494944" d="M8.07,15 C11.62,15 11.4,13.46 11.4,13.46 L11.4,11.87 L8,11.87 L8,11.4 L12.74,11.4 C12.74,11.4 15,11.65 15,8.07 C15,4.5 13.03,4.62 13.03,4.62 L11.85,4.62 L11.85,6.28 C11.85,6.28 11.91,8.25 9.91,8.25 L6.56,8.25 C6.56,8.25 4.68,8.22 4.68,10.07 L4.68,13.13 C4.68,13.13 4.4,15 8.07,15 Z M9.94,13.93 C9.6,13.93 9.33,13.66 9.33,13.32 C9.33,12.98 9.6,12.71 9.94,12.71 C10.28,12.71 10.55,12.98 10.55,13.32 C10.55,13.66 10.28,13.93 9.94,13.93 Z"/><path fill-rule="evenodd" fill="#3d9ad0" d="M7.93,1 C4.38,1 4.6,2.54 4.6,2.54 L4.6,4.13 L8,4.13 L8,4.6 L3.26,4.6 C3.26,4.6 1,4.35 1,7.93 C1,11.5 2.97,11.38 2.97,11.38 L4.15,11.38 L4.15,9.72 C4.15,9.72 4.09,7.75 6.09,7.75 L9.44,7.75 C9.44,7.75 11.32,7.78 11.32,5.93 L11.32,2.87 C11.32,2.87 11.6,1 7.93,1 Z M6.06,2.07 C6.4,2.07 6.67,2.34 6.67,2.68 C6.67,3.02 6.4,3.29 6.06,3.29 C5.72,3.29 5.45,3.02 5.45,2.68 C5.45,2.34 5.72,2.07 6.06,2.07 Z"/><path fill-rule="evenodd" fill="#f6c83c" d="M8.07,15 C11.62,15 11.4,13.46 11.4,13.46 L11.4,11.87 L8,11.87 L8,11.4 L12.74,11.4 C12.74,11.4 15,11.65 15,8.07 C15,4.5 13.03,4.62 13.03,4.62 L11.85,4.62 L11.85,6.28 C11.85,6.28 11.91,8.25 9.91,8.25 L6.56,8.25 C6.56,8.25 4.68,8.22 4.68,10.07 L4.68,13.13 C4.68,13.13 4.4,15 8.07,15 Z M9.94,13.93 C9.6,13.93 9.33,13.66 9.33,13.32 C9.33,12.98 9.6,12.71 9.94,12.71 C10.28,12.71 10.55,12.98 10.55,13.32 C10.55,13.66 10.28,13.93 9.94,13.93 Z"/></g>
<path d="M1357.3,85.3 L1365.7,93.7 M1365.7,85.3 L1357.3,93.7" stroke="#6e7173" stroke-width="1.2" fill="none"/>
<text x="48" y="126" font-size="14" fill="#afb1b3">››</text>
<clipPath id="c2"><rect x="52" y="142" width="12.5" height="46"/></clipPath><g clip-path="url(#c2)"><circle cx="67" cy="154.5" r="8" fill="#d3a85c"/><circle cx="67" cy="180" r="8" fill="#cf7689"/></g>
<path d="M1768,116 L1775.3,129.5 H1760.7 Z" fill="#8c8062"/><path d="M1768,120.5 V125.2 M1768,126.4 V128" stroke="#2b2b2b" stroke-width="1.6"/>
<path d="M1807.6,122.8 L1812.2,127 L1819.8,118.4" stroke="#499c54" stroke-width="3" fill="none"/><path d="M1806.8,131.2 l2.2,-2 l2.2,2 l2.2,-2 l2.2,2 l2.2,-2 l2.2,2" stroke="#499c54" stroke-width="1.1" fill="none"/>
<path d="M1848.6,125.8 L1853.2,120.9 L1857.8,125.8 M1874.2,121 L1879,126.3 L1883.8,121" stroke="#c0c0c0" stroke-width="1.9" fill="none"/>
<g transform="translate(90.68571428571428,194.68571428571428) scale(1.3142857142857143)" opacity="1"><path fill-rule="evenodd" fill="#4a83a3" d="M7.93,1 C4.38,1 4.6,2.54 4.6,2.54 L4.6,4.13 L8,4.13 L8,4.6 L3.26,4.6 C3.26,4.6 1,4.35 1,7.93 C1,11.5 2.97,11.38 2.97,11.38 L4.15,11.38 L4.15,9.72 C4.15,9.72 4.09,7.75 6.09,7.75 L9.44,7.75 C9.44,7.75 11.32,7.78 11.32,5.93 L11.32,2.87 C11.32,2.87 11.6,1 7.93,1 Z M6.06,2.07 C6.4,2.07 6.67,2.34 6.67,2.68 C6.67,3.02 6.4,3.29 6.06,3.29 C5.72,3.29 5.45,3.02 5.45,2.68 C5.45,2.34 5.72,2.07 6.06,2.07 Z"/><path fill-rule="evenodd" fill="#b5973e" d="M8.07,15 C11.62,15 11.4,13.46 11.4,13.46 L11.4,11.87 L8,11.87 L8,11.4 L12.74,11.4 C12.74,11.4 15,11.65 15,8.07 C15,4.5 13.03,4.62 13.03,4.62 L11.85,4.62 L11.85,6.28 C11.85,6.28 11.91,8.25 9.91,8.25 L6.56,8.25 C6.56,8.25 4.68,8.22 4.68,10.07 L4.68,13.13 C4.68,13.13 4.4,15 8.07,15 Z M9.94,13.93 C9.6,13.93 9.33,13.66 9.33,13.32 C9.33,12.98 9.6,12.71 9.94,12.71 C10.28,12.71 10.55,12.98 10.55,13.32 C10.55,13.66 10.28,13.93 9.94,13.93 Z"/></g>
<g transform="translate(233.68571428571428,194.68571428571428) scale(1.3142857142857143)" opacity="1"><path fill-rule="evenodd" fill="#4a83a3" d="M7.93,1 C4.38,1 4.6,2.54 4.6,2.54 L4.6,4.13 L8,4.13 L8,4.6 L3.26,4.6 C3.26,4.6 1,4.35 1,7.93 C1,11.5 2.97,11.38 2.97,11.38 L4.15,11.38 L4.15,9.72 C4.15,9.72 4.09,7.75 6.09,7.75 L9.44,7.75 C9.44,7.75 11.32,7.78 11.32,5.93 L11.32,2.87 C11.32,2.87 11.6,1 7.93,1 Z M6.06,2.07 C6.4,2.07 6.67,2.34 6.67,2.68 C6.67,3.02 6.4,3.29 6.06,3.29 C5.72,3.29 5.45,3.02 5.45,2.68 C5.45,2.34 5.72,2.07 6.06,2.07 Z"/><path fill-rule="evenodd" fill="#b5973e" d="M8.07,15 C11.62,15 11.4,13.46 11.4,13.46 L11.4,11.87 L8,11.87 L8,11.4 L12.74,11.4 C12.74,11.4 15,11.65 15,8.07 C15,4.5 13.03,4.62 13.03,4.62 L11.85,4.62 L11.85,6.28 C11.85,6.28 11.91,8.25 9.91,8.25 L6.56,8.25 C6.56,8.25 4.68,8.22 4.68,10.07 L4.68,13.13 C4.68,13.13 4.4,15 8.07,15 Z M9.94,13.93 C9.6,13.93 9.33,13.66 9.33,13.32 C9.33,12.98 9.6,12.71 9.94,12.71 C10.28,12.71 10.55,12.98 10.55,13.32 C10.55,13.66 10.28,13.93 9.94,13.93 Z"/></g>
<path d="M196.3,201.3 L204.7,209.7 M204.7,201.3 L196.3,209.7" stroke="#6e7b88" stroke-width="1.2" fill="none"/>
<path d="M281.6,201.3 L290.0,209.7 M290.0,201.3 L281.6,209.7" stroke="#6e7b88" stroke-width="1.2" fill="none"/>
<path fill-rule="evenodd" fill="#afb1b3" stroke="#afb1b3" stroke-width="0.8" stroke-linejoin="round" d="M1843.27,199.67 L1843.62,197.32 L1846.38,197.32 L1846.73,199.67 L1848.75,200.84 L1850.96,199.97 L1852.34,202.36 L1850.48,203.84 L1850.48,206.16 L1852.34,207.64 L1850.96,210.03 L1848.75,209.16 L1846.73,210.33 L1846.38,212.68 L1843.62,212.68 L1843.27,210.33 L1841.25,209.16 L1839.04,210.03 L1837.66,207.64 L1839.52,206.16 L1839.52,203.84 L1837.66,202.36 L1839.04,199.97 L1841.25,200.84 Z M1847.70,205 a2.7,2.7 0 1,0 -5.40,0 a2.7,2.7 0 1,0 5.40,0 Z"/>
<path d="M1870,204.8 H1885.6" stroke="#afb1b3" stroke-width="2.2"/>
<path d="M40,232.5 L52.3,239.9 L40,247.2 Z" fill="#499c54"/>
<g transform="translate(36.5,264)"><path d="M13.2,0.3 a4.8,4.8 0 0,0 -4.6,6.2 L0.5,14.6 a2,2 0 0,0 2.9,2.9 L11.7,9.1 a4.6,4.6 0 0,0 6.2,-4.4 l-2.9,2.9 l-2.7,-0.6 l-0.6,-2.7 l2.9,-2.9 a4.6,4.6 0 0,0 -1,-0.9z" fill="#afb1b3"/></g>
<rect x="39" y="308" width="12.4" height="12.4" fill="#5f6265"/>
<g fill="#afb1b3"><rect x="37" y="349" width="7.2" height="5.2"/><rect x="45.8" y="349" width="7.2" height="5.2"/><rect x="37" y="355.8" width="16" height="5.2"/></g>
<g transform="translate(36,387)" fill="#afb1b3"><path d="M9.6,0.4 L17.6,8.4 L15.9,10.1 L14.6,9.4 L11.2,12.8 Q11.9,15.4 10.2,17.2 L6.3,13.3 L0.8,18 L0,17.2 L4.7,11.7 L0.8,7.8 Q2.6,6.1 5.2,6.8 L8.6,3.4 L7.9,2.1 Z"/></g>
<path d="M81,248 V234.6 M75.3,240 L81,234.2 L86.7,240" stroke="#626567" stroke-width="2" fill="none"/>
<path d="M81,266.5 V280 M75.3,274.8 L81,280.6 L86.7,274.8" stroke="#626567" stroke-width="2" fill="none"/>
<g stroke="#ced0d2" stroke-width="2.1" fill="none"><path d="M73.5,299 H89.5"/><path d="M73.5,305.5 H86 a3.6,3.6 0 0,1 0,7.2 H80.5"/><path d="M73.5,312.7 H77"/><path d="M83.6,309.6 L80.2,312.7 L83.6,315.8"/></g>
<g stroke="#afb1b3" stroke-width="2.1" fill="none"><path d="M73,333 H79 M73,338.3 H79 M73,344.6 H89"/><path d="M84.2,330.2 V340 M80.3,336.4 L84.2,340.4 L88.1,336.4"/></g>
<g fill="#afb1b3"><rect x="75.5" y="363" width="11" height="4"/><path d="M72,368.2 H90 V376 H87 V373 H75 V376 H72 Z"/><path d="M76.2,374.3 H85.8 V380 H76.2 Z M77.6,375.6 V378.6 H84.4 V375.6 Z" fill-rule="evenodd"/></g>
<g fill="#afb1b3"><path d="M78.3,395 H83.2 V396.6 H87 V398.6 H74.5 V396.6 H78.3 Z"/><path d="M75.4,400 H86.1 V410 Q86.1,411.5 84.6,411.5 H76.9 Q75.4,411.5 75.4,410 Z"/></g>
<path fill-rule="evenodd" fill="#ed1c24" d="M97.5,223.4 H220.7 a4.5,4.5 0 0,1 4.5,4.5 V957.5 a4.5,4.5 0 0,1 -4.5,4.5 H97.5 a4.5,4.5 0 0,1 -4.5,-4.5 V227.9 a4.5,4.5 0 0,1 4.5,-4.5 Z M102.3,232.3 a1,1 0 0,0 -1,1 V953 a1,1 0 0,0 1,1 H216 a1,1 0 0,0 1,-1 V233.3 a1,1 0 0,0 -1,-1 Z"/>
<path d="M7,133.5 H13 L14.8,135.6 H22 V143.5 H7 Z" fill="#afb1b3"/>
<g fill="#afb1b3"><path d="M15,212 L23,216 L15,220 L7,216 Z"/><path d="M10,218.6 V221 Q15,224.6 20,221 V218.6 L15,221.2 Z"/></g>
<g fill="#afb1b3"><rect x="8" y="842.5" width="5.6" height="5.6"/><rect x="15" y="842.5" width="5.6" height="5.6"/><rect x="15" y="836" width="5.6" height="5.6" opacity="0.7"/></g>
<path d="M14.5,937.5 l2.2,5 l5.4,0.5 l-4.1,3.6 l1.2,5.3 l-4.7,-2.8 l-4.7,2.8 l1.2,-5.3 l-4.1,-3.6 l5.4,-0.5z" fill="#afb1b3"/>
<g fill="#afb1b3"><rect x="1901" y="87.3" width="3" height="3.2"/><rect x="1901" y="91.39999999999999" width="3" height="3.2"/><rect x="1901" y="95.5" width="3" height="3.2"/><rect x="1905" y="87.3" width="3" height="3.2"/><rect x="1905" y="91.39999999999999" width="3" height="3.2"/><rect x="1905" y="95.5" width="3" height="3.2"/><rect x="1909" y="87.3" width="3" height="3.2"/><rect x="1909" y="91.39999999999999" width="3" height="3.2"/><rect x="1909" y="95.5" width="3" height="3.2"/><rect x="1913" y="87.3" width="3" height="3.2"/><rect x="1913" y="91.39999999999999" width="3" height="3.2"/><rect x="1913" y="95.5" width="3" height="3.2"/></g>
<g fill="#afb1b3"><ellipse cx="1908" cy="181.3" rx="6.6" ry="2.4"/><path d="M1901.4,183.4 q6.6,3.4 13.2,0 v2.6 q-6.6,3.4 -13.2,0z"/><path d="M1901.4,186.9 q6.6,3.4 13.2,0 v2.6 q-6.6,3.4 -13.2,0z"/><path d="M1901.4,190.4 q6.6,3.4 13.2,0 v2.6 q-6.6,3.4 -13.2,0z"/></g>
<path d="M40,977 L50,982.8 L40,988.5 Z" fill="#afb1b3"/>
<g transform="translate(107.3,974.6) scale(0.84)"><ellipse cx="8.5" cy="10.5" rx="5.5" ry="7.1" fill="#afb1b3"/><path d="M5,0.6 L7,4 M12,0.6 L10,4 M0.7,5.8 H4.5 M16.3,5.8 H12.5 M0.4,10.2 H4 M16.6,10.2 H13 M0.7,14.6 H4.5 M16.3,14.6 H12.5" stroke="#afb1b3" stroke-width="2.1" fill="none"/></g>
<g fill="#afb1b3"><rect x="196" y="976.6" width="2.4" height="2.4"/><rect x="200" y="976.6" width="8.5" height="2.4"/><rect x="196" y="980.9" width="2.4" height="2.4"/><rect x="200" y="980.9" width="8.5" height="2.4"/><rect x="196" y="985.2" width="2.4" height="2.4"/><rect x="200" y="985.2" width="8.5" height="2.4"/></g>
<circle cx="287.2" cy="981.2" r="6.7" fill="#afb1b3"/><path d="M287.2,977 V982.1 M287.2,983.2 V985" stroke="#3c3f41" stroke-width="1.8"/>
<rect x="384.5" y="975" width="14" height="13" fill="#afb1b3"/><path d="M387,978 L390.6,981 L387,984 M391.5,985 H396" stroke="#3c3f41" stroke-width="1.4" fill="none"/>
<g fill="#afb1b3"><path d="M493,974.5 L500.5,978 L493,981.5 L485.5,978 Z"/><path d="M485.5,981.4 L487.6,980.4 L493,982.9 L498.4,980.4 L500.5,981.4 L493,984.9 Z"/><path d="M485.5,984.8 L487.6,983.8 L493,986.3 L498.4,983.8 L500.5,984.8 L493,988.3 Z"/></g>
<g transform="translate(641.9285714285714,973.4285714285714) scale(1.0714285714285714)" opacity="1"><path fill-rule="evenodd" fill="#afb1b3" d="M7.93,1 C4.38,1 4.6,2.54 4.6,2.54 L4.6,4.13 L8,4.13 L8,4.6 L3.26,4.6 C3.26,4.6 1,4.35 1,7.93 C1,11.5 2.97,11.38 2.97,11.38 L4.15,11.38 L4.15,9.72 C4.15,9.72 4.09,7.75 6.09,7.75 L9.44,7.75 C9.44,7.75 11.32,7.78 11.32,5.93 L11.32,2.87 C11.32,2.87 11.6,1 7.93,1 Z M6.06,2.07 C6.4,2.07 6.67,2.34 6.67,2.68 C6.67,3.02 6.4,3.29 6.06,3.29 C5.72,3.29 5.45,3.02 5.45,2.68 C5.45,2.34 5.72,2.07 6.06,2.07 Z"/><path fill-rule="evenodd" fill="#afb1b3" d="M8.07,15 C11.62,15 11.4,13.46 11.4,13.46 L11.4,11.87 L8,11.87 L8,11.4 L12.74,11.4 C12.74,11.4 15,11.65 15,8.07 C15,4.5 13.03,4.62 13.03,4.62 L11.85,4.62 L11.85,6.28 C11.85,6.28 11.91,8.25 9.91,8.25 L6.56,8.25 C6.56,8.25 4.68,8.22 4.68,10.07 L4.68,13.13 C4.68,13.13 4.4,15 8.07,15 Z M9.94,13.93 C9.6,13.93 9.33,13.66 9.33,13.32 C9.33,12.98 9.6,12.71 9.94,12.71 C10.28,12.71 10.55,12.98 10.55,13.32 C10.55,13.66 10.28,13.93 9.94,13.93 Z"/></g>
<path d="M1806,975.3 H1808 Q1815.2,975.3 1815.2,982.5 V989.6 H1806 Q1798.9,989.6 1798.9,982.5 Q1798.9,975.3 1806,975.3 Z" fill="#db5a54"/>
<text x="1803.11" y="985.8" font-size="9.6" fill="#ffffff" font-weight="bold" textLength="6.26" lengthAdjust="spacingAndGlyphs">2</text>
<path d="M11.2,1001.6 H22 V1012.4 H11.2 Z M8,1004 V1014.8 H20" stroke="#afb1b3" stroke-width="1.3" fill="none"/>
<g><path d="M1890.6,1007.5 v-3.4 a2.9,2.9 0 0,1 5.8,0 v1" stroke="#afb1b3" stroke-width="1.5" fill="none"/><rect x="1893.2" y="1007.2" width="10.8" height="7.3" fill="#afb1b3"/></g>
<text x="1777" y="1006.6" font-size="18.4" fill="#f2f2f2" fill-opacity="0.86" textLength="72" lengthAdjust="spacingAndGlyphs">CSDN @</text>
<text x="1850.5" y="1006.6" font-size="18.2" fill="#f2f2f2" fill-opacity="0.86" textLength="36.8" lengthAdjust="spacingAndGlyphs" font-weight="300">小木</text>
</svg>
</div></body></html>
